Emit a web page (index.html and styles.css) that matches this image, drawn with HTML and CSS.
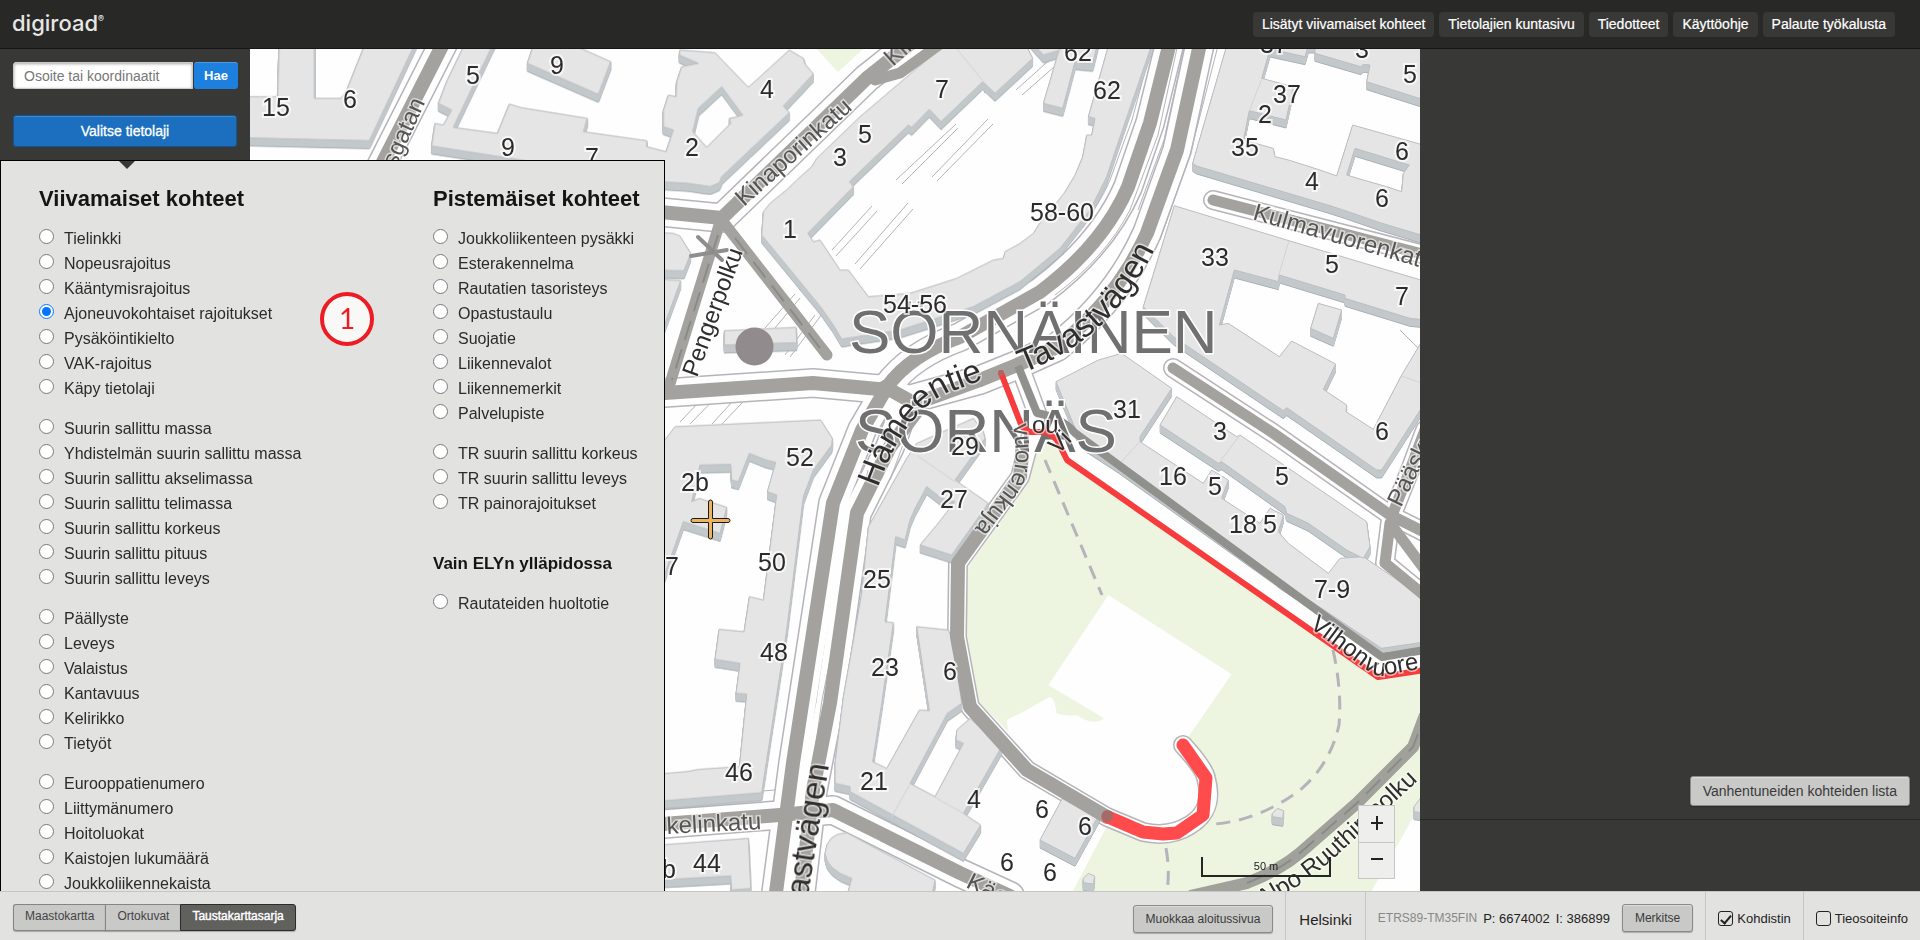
FILE: index.html
```
<!DOCTYPE html>
<html lang="fi">
<head>
<meta charset="utf-8">
<title>Digiroad</title>
<link rel="stylesheet" href="styles.css">
</head>
<body>
<header class="topbar">
  <div class="logo">digiroad<sup>®</sup></div>
  <nav class="topnav">
    <a href="#">Lisätyt viivamaiset kohteet</a>
    <a href="#">Tietolajien kuntasivu</a>
    <a href="#">Tiedotteet</a>
    <a href="#">Käyttöohje</a>
    <a href="#">Palaute työkalusta</a>
  </nav>
</header>

<main class="workspace">
  <aside class="sidebar">
    <form class="search">
      <input type="text" placeholder="Osoite tai koordinaatit" aria-label="Osoite tai koordinaatit">
      <button type="button">Hae</button>
    </form>
    <button type="button" class="select-layer">Valitse tietolaji</button>
  </aside>

  <section class="map" aria-label="Kartta">
    <svg class="map-canvas" viewBox="250 49 1170 842" preserveAspectRatio="xMidYMid slice">
      <rect x="0" y="0" width="1920" height="940" fill="#fefefe"/>

      <!-- parks -->
      <g class="park">
        <path d="M817 49L838 72L863 49Z"/>
        <g transform="translate(1040 430) scale(.33333)">
          <path d="M-30 -5L30 10L80 90L1010 740L1160 715V1090L985 1400H90L200 1190L-95 905L-190 810L-225 620L-215 410L-30 150L-40 20Z"/>
          <path class="yard" d="M25 765L205 495L575 733L445 920L500 1010L500 1150L350 1215L150 1140L-95 905L-100 870L-50 845L30 800Q45 805 50 850Q80 860 110 855Q160 890 192 865Z"/>
        </g>
      </g>

      <!-- walking lines in yards -->
      <g class="hatch">
        <path d="M896 180L956 124M902 184L958 128M932 177L988 119M937 181L993 124M832 250L872 206M836 256L877 211M855 264L908 203M860 269L913 209M984 93L1030 48M1016 90L1055 55M1022 95L1062 60M765 328L795 294M775 328L800 298M785 355L815 315M790 357L825 310"/>
        <path d="M680 422L719 381M690 424L732 381M712 424L752 380M722 424L760 384M650 800L800 788M1400 330L1420 350"/>
      </g>

      <!-- road casings -->
      <g class="casing">
        <path class="w50" d="M1173 30L1150 123L1128 187Q1103 245 1040 292L960 337Q910 355 887 387L862 430L833 503L793 763L775 900"/>
        <path class="w50" d="M1203 30L1177 150L1147 233Q1117 300 1057 347L1017 365L980 380L907 400L885 387"/>
        <path class="w50" d="M907 400L890 447L857 513L830 703L813 790L800 900"/>
        <path class="w50" d="M650 394L813 383L890 390M640 210L722 218L867 78L915 40M380 168L445 40"/>
        <path class="w50" d="M650 825L780 815L833 810L960 873L1010 896"/>
        <path class="w40" d="M1213 200L1430 256M1173 368L1273 433L1390 515L1430 535M1393 513L1410 470L1425 430M1390 523L1385 563L1430 600"/>
        <path class="w40" d="M1020 367L1037 413L1020 477L958 563L957 637L970 707L1027 770L1107 817L1143 832Q1170 838 1190 825Q1215 810 1206 778Q1204 768 1183 745"/>
      </g>
      <g class="casing-inner">
        <path class="w50" d="M1173 30L1150 123L1128 187Q1103 245 1040 292L960 337Q910 355 887 387L862 430L833 503L793 763L775 900"/>
        <path class="w50" d="M1203 30L1177 150L1147 233Q1117 300 1057 347L1017 365L980 380L907 400L885 387"/>
        <path class="w50" d="M907 400L890 447L857 513L830 703L813 790L800 900"/>
        <path class="w50" d="M650 394L813 383L890 390M640 210L722 218L867 78L915 40M380 168L445 40"/>
        <path class="w50" d="M650 825L780 815L833 810L960 873L1010 896"/>
        <path class="w40" d="M1213 200L1430 256M1173 368L1273 433L1390 515L1430 535M1393 513L1410 470L1425 430M1390 523L1385 563L1430 600"/>
        <path class="w40" d="M1020 367L1037 413L1020 477L958 563L957 637L970 707L1027 770L1107 817L1143 832Q1170 838 1190 825Q1215 810 1206 778Q1204 768 1183 745"/>
      </g>
      <path class="kerb" d="M1156 30L1132 120L1110 180Q1090 228 1034 272M1188 30L1164 140L1138 210M1181 30L1158 135L1130 210Q1105 258 1055 295M1222 30L1190 155L1160 240M868 470L822 700L795 891M912 420L890 480"/>

      <!-- buildings -->
      <g class="buildings">
        <g transform="translate(240 40) scale(.33333)">
          <path d="M0 170H113L118 0H223V175H303L320 150L380 0H530L388 302L0 293Z"/>
          <path d="M680 0H765L752 27L662 215L640 262L772 280L808 192L845 203L1042 235L1030 275L1220 302L1220 320L1278 335L1300 270L1270 260L1270 212L1285 165L1308 170L1310 125L1325 80L1375 70L1318 45L1320 30L1425 38L1525 142L1648 30L1690 55L1695 72L1720 102L1630 198L1648 218L1445 410L1438 428L1410 440L1345 430L1260 425L575 318L585 250L610 255L635 210L595 190L622 120ZM1445 140L1375 205L1358 275L1400 322L1472 250L1468 235L1485 232L1508 225Z"/>
          <path d="M885 0L1000 15L1112 65L1075 163L862 70Z"/>
        </g>
        <g transform="translate(660 40) scale(.33333)">
          <path d="M870 0L600 230L470 355L455 380L410 420L385 445L330 490L310 515L305 585L465 780L485 805L520 855L545 897L720 870L940 800L1080 725L1200 625L1290 510L1340 410L1370 320L1480 0H1350L1285 230L1305 235L1295 285L1280 285L1268 350L1245 405L1212 460L1135 555L1120 580L1080 610L1035 635L1030 655L1000 660L890 715L750 760L625 770L565 690L540 690L480 600L460 605L443 580L580 440L568 425L745 255L755 262L808 208L843 245L968 125L1005 160L1118 55L1090 0Z"/>
          <path d="M1200 20L1150 190L1208 205L1245 65L1298 70L1315 0H1205Z"/>
          <path d="M1110 0L1150 45L1200 30V0Z"/>
          <path d="M-40 575L40 580L60 588L92 640L72 692L-40 690Z"/>
          <path d="M-40 715L62 722L15 850L-40 1000Z"/>
          <path d="M193 872L408 862L410 908L193 915Z"/>
          <path class="seam" d="M885 20L968 122"/>
        </g>
        <g transform="translate(1040 40) scale(.33333)">
          <path d="M565 0L458 370L470 378L870 497L925 515L1020 548L1160 590V0ZM690 27L665 115L760 140L738 240L628 212L610 300L700 325L705 350L745 360L840 390L890 408L938 255L1160 318V182L980 125L990 75L970 73L962 80L825 40V15L805 15L795 50ZM945 325L1108 375L1090 400L1085 455L1040 440L970 420L920 405Z"/>
          <path d="M403 497L740 600L990 675L1160 725V840L1110 835L915 775V765L718 705L715 725L583 690L538 855L565 850L718 950L755 903L887 972L850 1048L920 1095L918 1115L1000 1168L1085 1005L1160 880V1080L1025 1290H1010L740 1103L730 1112L400 890L310 800Z"/>
          <path d="M835 790L905 810L880 895L812 865Z"/>
          <path class="seam" d="M747 602L715 710M1085 1008L1160 1035M665 118L628 212"/>
        </g>
        <g transform="translate(1040 430) scale(.33333)">
          <path d="M48 -145L97 -170L175 -210L245 -230L395 -125L300 20V35L490 160L515 120L565 150L545 205L660 280L690 235L730 255L715 305L745 340L865 430L900 385L970 380L1160 510V635L1025 655L720 452L705 440L235 105L120 30Z"/>
          <path d="M360 -15L410 -100L590 20L600 15L980 275L990 350L970 385L920 360L805 280L795 275L740 250L735 230L545 95L535 100Z"/>
          <path d="M0 1230L75 1090L185 1140L105 1285Z"/>
          <path d="M697 1150L712 1135L731 1142L728 1165L697 1160Z"/>
          <path d="M130 1345L145 1330L164 1338L160 1362L130 1358Z"/>
          <path d="M1122 1130L1145 1100L1160 1100V1150L1122 1145Z"/>
          <path class="seam" d="M300 35L235 105M600 15L540 95"/>
        </g>
        <g transform="translate(660 430) scale(.33333)">
          <path d="M-40 100L45 -10L482 -30L517 25L515 45L460 120L430 200L380 600L305 1088L15 1112L-40 1115V1035L78 1025L118 1018L238 1010L260 792L228 790L240 700L165 688L177 598L252 605L268 500L310 510L350 195L322 185L347 97L318 90L268 70L235 155L215 150L212 103L120 105L95 215L118 205L200 232L180 310L70 275L15 430L-40 560Z"/>
          <path d="M-40 1248L265 1225L272 1375L215 1380L212 1338L-40 1352Z"/>
          <path d="M740 85L770 40L940 -35L970 5L975 25L885 150L985 220L875 375L780 345L830 285L885 215L845 205L800 170L765 235L750 270L735 330L707 320L675 575L700 578L665 820L638 995L680 1015L778 840L808 842L770 590L865 600L880 640L905 820L862 850L750 1060L825 1100L910 940L888 930L890 900L930 865L1025 950L910 1150L962 1185L910 1270L570 1085V1070L525 1060V1000L550 800L605 490L625 290Z"/>
          <path d="M495 1270Q500 1210 560 1208L825 1350L815 1400H560L575 1345Q500 1320 495 1270Z"/>
          <path class="seam" d="M775 80L885 155M750 1062L695 1160M825 1102L910 1150"/>
        </g>
      </g>

      <!-- roads -->
      <g class="road">
        <path class="r13" d="M1173 30L1150 123L1128 187Q1103 245 1040 292L960 337Q910 355 887 387L862 430L833 503L793 763L775 900"/>
        <path class="r13" d="M1203 30L1177 150L1147 233Q1117 300 1057 347L1017 365L980 380M912 402L885 387"/>
        <path class="r13" d="M980 380L925 400L890 447L857 513L830 703L813 790L800 900"/>
        <path class="r13" d="M650 394L813 383L890 390M640 210L722 218L867 78L915 40M380 168L445 40M650 825L780 815L833 810L960 873L1010 896"/>
        <path class="r11" d="M720 222L668 390M724 223L827 355M875 80L900 73L940 44"/>
        <path class="r11" d="M1213 200L1430 256M1173 368L1273 433L1390 515L1430 535M1393 513L1410 470L1425 430M1390 523L1385 563L1430 600M1393 527L1425 570"/>
        <path class="r13" d="M1023 442L1020 477L958 563L957 637L970 707L1027 770L1107 817"/>
        <path class="r6" d="M698 237L722 260M691 256L727 250"/>
      </g>
      <path class="lane" d="M1018 366L1037 413Q1062 418 1075 433L1307 603L1382 657L1425 650"/>
      <path class="trail" d="M1190 896L1247 883Q1280 870 1300 853L1357 803L1413 747L1425 715"/>
      <path class="trail-dash" d="M1247 883Q1280 870 1300 853L1357 803L1413 747L1425 715M718 235L672 380M735 238L820 348"/>
      <path class="footway" d="M1045 460L1102 595M1333 650Q1342 690 1339 725Q1330 765 1300 790Q1260 820 1215 824M1166 848Q1170 870 1167 892"/>
      <circle cx="754.500" cy="346.500" r="19" fill="#928b8d"/>

      <!-- district names -->
      <g class="district">
        <text x="849" y="353">SÖRNÄINEN</text>
        <text x="855" y="452">SÖRNÄS</text>
      </g>

      <!-- selected restrictions -->
      <g class="restriction">
        <path class="thin" d="M1001 373L1022 427L1030 432H1048L1057 440L1067 460L1378 677L1425 670"/>
        <path class="thick" d="M1108 817L1143 832L1163 834L1177 833L1203 815L1206 778L1183 745"/>
      </g>
      <circle cx="1107.500" cy="816" r="6" fill="#a66a69"/>
      <circle cx="1001" cy="373" r="3" fill="#b26462"/>

      <!-- street names -->
      <defs>
        <path id="p-hameentie" d="M878 488Q903 415 945 394L995 375"/>
        <path id="p-tavast" d="M1023 373Q1077 352 1114 312Q1144 277 1163 230"/>
        <path id="p-kuja" d="M1013 424Q1020 470 1008 485L966 540"/>
        <path id="p-vilhon" d="M1309 627L1368 671Q1376 677 1386 675L1430 667"/>
        <path id="p-ruuthin" d="M1262 907Q1310 882 1345 848L1425 774"/>
      </defs>
      <g class="street minor">
        <text transform="translate(744 207) rotate(-42)">Kinaporinkatu</text>
        <text transform="translate(893 67) rotate(-42)">Kinap</text>
        <text transform="translate(1252 219) rotate(16)">Kulmavuorenkatu</text>
        <text transform="translate(667 834) rotate(-3)">kelinkatu</text>
        <text transform="translate(965 887) rotate(26)">Käen</text>
        <text transform="translate(396 168) rotate(-66)">sgatan</text>
        <text transform="translate(1401 508) rotate(-64)">Pääsky</text>
        <text><textPath href="#p-kuja">vuorenkuja</textPath></text>
      </g>
      <g class="street">
        <text transform="translate(697 378) rotate(-70)">Pengerpolku</text>
        <text><textPath href="#p-vilhon">Vilhonvuore</textPath></text>
        <text><textPath href="#p-ruuthin">Alpo Ruuthin polku</textPath></text>
        <text x="1032" y="433">ou</text>
        <text transform="translate(1058 455) rotate(-45)">Vi</text>
      </g>
      <g class="street major">
        <text><textPath href="#p-hameentie">Hämeentie</textPath></text>
        <text><textPath href="#p-tavast">Tavastvägen</textPath></text>
        <text transform="translate(829 765) rotate(-81)" text-anchor="end">Tavastvägen</text>
      </g>

      <!-- house numbers -->
      <g class="house">
        <text x="276" y="116">15</text><text x="350" y="108">6</text><text x="473" y="84">5</text>
        <text x="557" y="74">9</text><text x="508" y="156">9</text><text x="592" y="166">7</text>
        <text x="767" y="98">4</text><text x="692" y="156">2</text><text x="942" y="98">7</text>
        <text x="865" y="143">5</text><text x="840" y="166">3</text><text x="790" y="238">1</text>
        <text x="915" y="313">54-56</text><text x="1062" y="221">58-60</text><text x="1078" y="61">62</text>
        <text x="1107" y="99">62</text><text x="1274" y="53">37</text><text x="1362" y="58">3</text>
        <text x="1410" y="83">5</text><text x="1287" y="103">37</text><text x="1265" y="123">2</text>
        <text x="1245" y="156">35</text><text x="1402" y="160">6</text><text x="1312" y="190">4</text>
        <text x="1382" y="207">6</text><text x="1215" y="266">33</text><text x="1332" y="273">5</text>
        <text x="1402" y="305">7</text><text x="1127" y="418">31</text><text x="1220" y="440">3</text>
        <text x="1382" y="440">6</text><text x="800" y="466">52</text><text x="695" y="491">2b</text>
        <text x="672" y="575">7</text><text x="772" y="571">50</text><text x="965" y="455">29</text>
        <text x="954" y="508">27</text><text x="877" y="588">25</text><text x="774" y="661">48</text>
        <text x="885" y="676">23</text><text x="950" y="680">6</text><text x="739" y="781">46</text>
        <text x="874" y="790">21</text><text x="974" y="808">4</text><text x="707" y="872">44</text>
        <text x="1042" y="818">6</text><text x="1007" y="871">6</text><text x="1050" y="881">6</text>
        <text x="669" y="878">b</text><text x="1173" y="485">16</text><text x="1215" y="495">5</text>
        <text x="1282" y="485">5</text><text x="1243" y="533">18</text><text x="1270" y="533">5</text>
        <text x="1332" y="598">7-9</text><text x="1085" y="835">6</text>
      </g>

      <!-- position marker -->
      <path class="cross" d="M708.500 502a2 2 0 0 1 4 0V518.500H728a2 2 0 0 1 0 4H712.500V537a2 2 0 0 1-4 0V522.500H693a2 2 0 0 1 0-4H708.500Z"/>
    </svg>
    <div class="map-controls">
      <div class="scale">50 m</div>
      <div class="zoom">
        <button type="button" aria-label="Lähennä"><svg viewBox="0 0 14 14"><path d="M1 7H13M7 0V14"/></svg></button>
        <button type="button" aria-label="Loitonna"><svg viewBox="0 0 14 14"><path d="M1 7H13"/></svg></button>
      </div>
    </div>
  </section>

  <aside class="rightbar">
    <div class="rightbar-actions"><button type="button" class="btn btn-large">Vanhentuneiden kohteiden lista</button></div>
    <div class="rightbar-bottom"></div>
  </aside>

  <form class="layer-menu">
    <section class="menu-col">
      <h2>Viivamaiset kohteet</h2>
      <div class="group">
        <label><input type="radio" name="layer">Tielinkki</label>
        <label><input type="radio" name="layer">Nopeusrajoitus</label>
        <label><input type="radio" name="layer">Kääntymisrajoitus</label>
        <label><input type="radio" name="layer" checked>Ajoneuvokohtaiset rajoitukset</label>
        <label><input type="radio" name="layer">Pysäköintikielto</label>
        <label><input type="radio" name="layer">VAK-rajoitus</label>
        <label><input type="radio" name="layer">Käpy tietolaji</label>
      </div>
      <div class="group">
        <label><input type="radio" name="layer">Suurin sallittu massa</label>
        <label><input type="radio" name="layer">Yhdistelmän suurin sallittu massa</label>
        <label><input type="radio" name="layer">Suurin sallittu akselimassa</label>
        <label><input type="radio" name="layer">Suurin sallittu telimassa</label>
        <label><input type="radio" name="layer">Suurin sallittu korkeus</label>
        <label><input type="radio" name="layer">Suurin sallittu pituus</label>
        <label><input type="radio" name="layer">Suurin sallittu leveys</label>
      </div>
      <div class="group">
        <label><input type="radio" name="layer">Päällyste</label>
        <label><input type="radio" name="layer">Leveys</label>
        <label><input type="radio" name="layer">Valaistus</label>
        <label><input type="radio" name="layer">Kantavuus</label>
        <label><input type="radio" name="layer">Kelirikko</label>
        <label><input type="radio" name="layer">Tietyöt</label>
      </div>
      <div class="group">
        <label><input type="radio" name="layer">Eurooppatienumero</label>
        <label><input type="radio" name="layer">Liittymänumero</label>
        <label><input type="radio" name="layer">Hoitoluokat</label>
        <label><input type="radio" name="layer">Kaistojen lukumäärä</label>
        <label><input type="radio" name="layer">Joukkoliikennekaista</label>
      </div>
    </section>
    <section class="menu-col">
      <h2>Pistemäiset kohteet</h2>
      <div class="group">
        <label><input type="radio" name="layer">Joukkoliikenteen pysäkki</label>
        <label><input type="radio" name="layer">Esterakennelma</label>
        <label><input type="radio" name="layer">Rautatien tasoristeys</label>
        <label><input type="radio" name="layer">Opastustaulu</label>
        <label><input type="radio" name="layer">Suojatie</label>
        <label><input type="radio" name="layer">Liikennevalot</label>
        <label><input type="radio" name="layer">Liikennemerkit</label>
        <label><input type="radio" name="layer">Palvelupiste</label>
      </div>
      <div class="group">
        <label><input type="radio" name="layer">TR suurin sallittu korkeus</label>
        <label><input type="radio" name="layer">TR suurin sallittu leveys</label>
        <label><input type="radio" name="layer">TR painorajoitukset</label>
      </div>
      <h3>Vain ELYn ylläpidossa</h3>
      <div class="group">
        <label><input type="radio" name="layer">Rautateiden huoltotie</label>
      </div>
    </section>
    <span class="step">1</span>
  </form>
</main>

<footer class="bottombar">
  <div class="map-types">
    <button type="button">Maastokartta</button><button type="button">Ortokuvat</button><button type="button" class="active">Taustakarttasarja</button>
  </div>
  <div class="cell cell-edit"><button type="button" class="btn">Muokkaa aloitussivua</button></div>
  <div class="cell city">Helsinki</div>
  <div class="cell coords"><span class="crs">ETRS89-TM35FIN</span><span>P: 6674002</span><span>I: 386899</span><button type="button" class="btn btn-mark">Merkitse</button></div>
  <div class="cell check"><label><input type="checkbox" checked>Kohdistin</label></div>
  <div class="cell check"><label><input type="checkbox">Tieosoiteinfo</label></div>
</footer>
</body>
</html>
```
FILE: styles.css
```
* { box-sizing: border-box; }
html, body { height: 100%; }
body {
  margin: 0;
  display: flex;
  flex-direction: column;
  overflow: hidden;
  font-family: "Liberation Sans", Arial, sans-serif;
  font-size: 16px;
  color: #222;
  background: #383836;
}
button, input { font-family: inherit; margin: 0; }

/* top bar */
.topbar {
  display: flex;
  align-items: center;
  justify-content: space-between;
  height: 49px;
  padding: 0 25px 0 12px;
  background: #282827;
  border-bottom: 1px solid #161616;
}
.logo {
  font-family: Inter, sans-serif;
  font-size: 22px;
  font-weight: 500;
  line-height: 24px;
  color: #e6e6e4;
  padding-bottom: 3px;
}
.logo sup { font-size: 9px; line-height: 0; vertical-align: 9px; }
.topnav { display: flex; gap: 5px; }
.topnav a {
  padding: 0 9px;
  line-height: 25px;
  font-size: 14px;
  color: #fff;
  -webkit-text-stroke: 0.2px #fff;
  text-decoration: none;
  background: #383836;
  border-radius: 4px;
}

/* main area */
.workspace {
  position: relative;
  flex: 1;
  min-height: 0;
  display: grid;
  grid-template-columns: 250px 1fr 500px;
}
.sidebar { padding: 13px 12px 13px 13px; background: #383836; }
.search { display: flex; gap: 1px; }
.search input {
  width: 180px;
  height: 27px;
  padding: 0 10px;
  font-size: 14px;
  color: #333;
  border: 1px solid #ccc;
  border-radius: 3px 0 0 3px;
  box-shadow: inset 0 1px 3px rgba(0,0,0,.35);
}
.search input::placeholder { color: #777; }
.search button {
  flex: 1;
  max-width: 44px;
  padding: 0 0 2px;
  font-size: 13px;
  font-weight: bold;
  color: #fff;
  background: #1d80de;
  border: 0;
  border-top: 1px solid #4a9ae6;
  border-radius: 3px;
}
.select-layer {
  display: block;
  width: 224px;
  height: 32px;
  margin: 26px 0 0;
  font-size: 14px;
  color: #fff;
  -webkit-text-stroke: 0.3px #fff;
  background: #1c6fbe;
  border: 1px solid #14558f;
  border-radius: 3px;
  box-shadow: inset 0 1px 0 #3d88cd;
}

/* map */
.map { position: relative; overflow: hidden; background: #fefefe; }
.map-canvas { position: absolute; inset: 0; width: 100%; height: 100%; }
.park { fill: #edf4df; }
.park .yard { fill: #fefefe; }
.hatch { fill: none; stroke: #b4b4b8; stroke-width: 1; }
.buildings {
  filter: drop-shadow(0 1px 0 #c3c8cb) drop-shadow(0 2px 0 #c3c8cb) drop-shadow(0 4px 0 #c3c8cb) drop-shadow(0 1px 0 #a9afb4);
}
.buildings path { fill: #e5e5e5; fill-rule: evenodd; stroke: #bcbec1; stroke-width: 3; stroke-linejoin: round; }
.buildings .seam { fill: none; stroke: #d3d3d3; }
.casing, .casing-inner, .road { fill: none; stroke-linejoin: round; stroke-linecap: round; }
.casing { stroke: #b4b4ba; }
.casing .w50 { stroke-width: 30; }
.casing .w40 { stroke-width: 20; }
.casing-inner { stroke: #fefefe; }
.casing-inner .w50 { stroke-width: 27; }
.casing-inner .w40 { stroke-width: 17; }
.kerb { fill: none; stroke: #b4b4ba; stroke-width: 1; }
.road { stroke: #a3a29f; }
.r13 { stroke-width: 14; }
.r11 { stroke-width: 11; }
.r6 { stroke-width: 4; stroke: #8f8e8d; }
.lane { fill: none; stroke: #90918d; stroke-width: 8; stroke-linejoin: round; }
.trail { fill: none; stroke: #a0a19a; stroke-width: 12; }
.trail-dash { fill: none; stroke: #8a8b88; stroke-width: 2; stroke-dasharray: 20 10; }
.footway { fill: none; stroke: #b4b4ba; stroke-width: 3; stroke-dasharray: 14 9; }
.restriction { fill: none; stroke: #ff4b4b; stroke-linejoin: round; stroke-linecap: round; }
.restriction .thin { stroke-width: 6; stroke: #f63c3c; }
.restriction .thick { stroke-width: 13; }
.district text { font-size: 62px; fill: #707070; stroke: #fff; stroke-width: 3; paint-order: stroke; }
.house text {
  font-size: 25px;
  text-anchor: middle;
  fill: #2c2a2a;
  stroke: rgba(255,255,255,.7);
  stroke-width: 4;
  paint-order: stroke;
}
.street text { font-size: 24px; fill: #2f2d2d; stroke: rgba(255,255,255,.6); stroke-width: 3; paint-order: stroke; }
.minor text { fill: #555453; }
.major text { font-size: 33px; }
.cross { fill: #edb260; stroke: #1b1b1b; stroke-width: 1; }

.map-controls {
  position: absolute;
  right: 25px;
  bottom: 12px;
  display: flex;
  align-items: flex-end;
  gap: 27px;
}
.scale {
  width: 130px;
  height: 20px;
  margin-bottom: 2px;
  font-size: 11px;
  line-height: 18px;
  text-align: center;
  border: 2px solid #262626;
  border-top: 0;
}
.zoom { display: flex; flex-direction: column; border: 1px solid #c6c6c6; }
.zoom button {
  display: grid;
  place-items: center;
  width: 35px;
  height: 36px;
  padding: 0 0 3px;
  background: #eeeeed;
  border: 0;
}
.zoom button + button { border-top: 1px solid #c6c6c6; }
.zoom svg { width: 14px; height: 14px; fill: none; stroke: #222; stroke-width: 2; }

/* right side */
.rightbar { display: flex; flex-direction: column; justify-content: flex-end; background: #383836; }
.rightbar-actions { display: flex; justify-content: flex-end; padding: 13px 10px; }
.rightbar-bottom { height: 72px; border-top: 1px solid #272727; }
.btn {
  height: 28px;
  padding: 0 12px;
  font-size: 12px;
  color: #3a3a3a;
  background: #c9c9c8;
  border: 1px solid #8a8a8a;
  border-radius: 3px;
  box-shadow: inset 0 1px 0 #dcdcdc, 0 1px 1px rgba(0,0,0,.25);
}
.btn-large { height: 30px; font-size: 14px; }

/* layer menu */
.layer-menu {
  position: absolute;
  top: 111px;
  bottom: 0;
  left: 0;
  width: 665px;
  display: grid;
  grid-template-columns: 394px 1fr;
  padding: 25px 0 0 38px;
  overflow: hidden;
  background: #e2e2e0;
  border: 1px solid #000;
  border-bottom: 0;
}
.layer-menu::before {
  content: "";
  position: absolute;
  top: 0;
  left: 118px;
  border: 8px solid transparent;
  border-top-color: #383836;
  border-bottom: 0;
}
.menu-col h2 { margin: 0 0 13px; font-size: 22px; line-height: 26px; color: #151515; }
.menu-col h3 { margin: 36px 0 14px; font-size: 17px; line-height: 25px; color: #151515; }
.group { margin-bottom: 15px; }
.group label { display: flex; gap: 10px; font-size: 16px; line-height: 27px; height: 25px; white-space: nowrap; color: #2b2b2b; }
.group input { width: 15px; height: 15px; margin-top: 4px; }
.step {
  position: absolute;
  left: 319px;
  top: 131px;
  width: 54px;
  height: 54px;
  font-family: Lato, sans-serif;
  font-size: 28px;
  line-height: 44px;
  text-align: center;
  color: #ed1c24;
  background: #f8f8f6;
  border: 4px solid #ed1c24;
  border-radius: 50%;
}

/* bottom bar */
.bottombar {
  display: flex;
  height: 49px;
  padding-left: 13px;
  font-size: 12px;
  background: #e2e2e0;
  border-top: 1px solid #c6c6c4;
}
.map-types { display: flex; align-items: center; margin-right: auto; padding-top: 2px; }
.map-types button {
  height: 27px;
  padding: 0 11px 2px;
  font-size: 12px;
  color: #444;
  background: #c9c9c8;
  border: 1px solid #858585;
  border-right: 0;
  box-shadow: 0 1px 1px rgba(0,0,0,.25);
}
.map-types button:first-child { border-radius: 3px 0 0 3px; }
.map-types .active {
  color: #fff;
  -webkit-text-stroke: 0.4px #fff;
  background: #60605d;
  border: 1px solid #2c2c2c;
  border-radius: 0 3px 3px 0;
}
.cell { display: flex; align-items: center; padding: 0 12px; }
.cell + .cell { border-left: 1px solid #c6c6c4; }
.cell-edit { padding-top: 6px; }
.city { padding: 6px 13px 0; font-size: 15px; }
.coords { gap: 6px; padding-top: 4px; font-size: 13px; }
.crs { font-size: 12px; color: #888; }
.btn-mark { margin-left: 6px; }
.check { padding-top: 5px; font-size: 13px; }
.check label { display: flex; align-items: center; gap: 4px; }
.check input {
  appearance: none;
  width: 15px;
  height: 15px;
  border: 1px solid #222;
  border-radius: 3px;
  display: grid;
  place-items: center;
}
.check input:checked::before {
  content: "";
  width: 4px;
  height: 9px;
  border: solid #222;
  border-width: 0 2px 2px 0;
  transform: rotate(40deg);
}
```
